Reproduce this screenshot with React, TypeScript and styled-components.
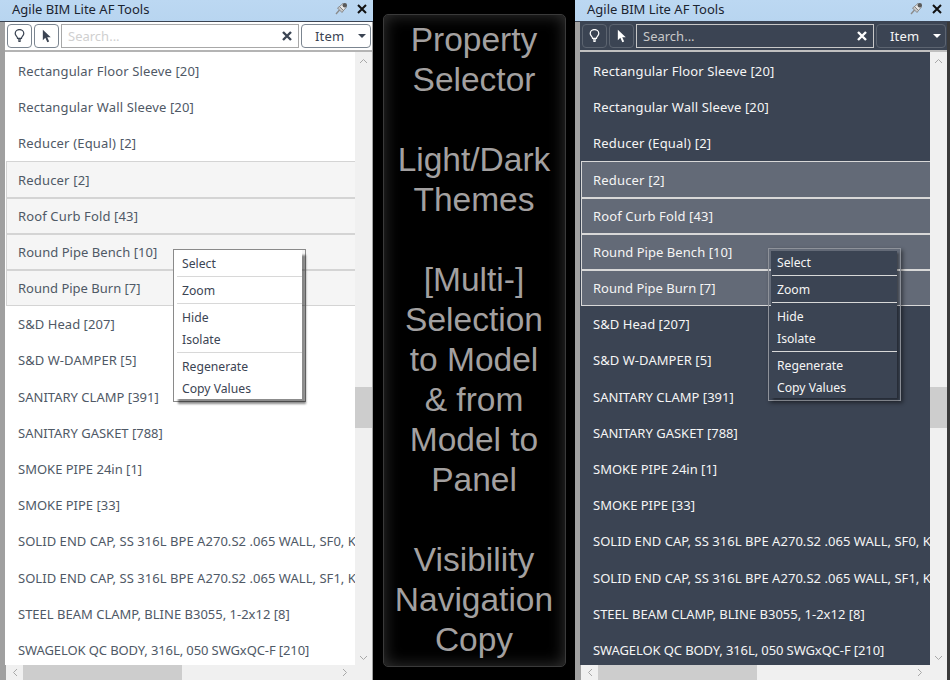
import React from "react";
import styled, { createGlobalStyle, css } from "styled-components";

const Global = createGlobalStyle`
  html, body { margin: 0; padding: 0; background: #000; overflow: hidden; }
  #root { width: 950px; height: 680px; }
`;

const Page = styled.div`
  width: 950px;
  height: 680px;
  display: flex;
  overflow: hidden;
  background: #000;
  font-family: "Noto Sans", "Open Sans", sans-serif;
`;

const Panel = styled.section<{ $dark?: boolean; $width: number }>`
  position: relative;
  width: ${(p) => p.$width}px;
  flex: none;
  height: 680px;
  display: flex;
  flex-direction: column;
  box-sizing: border-box;
  background: ${(p) => (p.$dark ? "linear-gradient(90deg, #a0a0a0 50%, #3a3a3a 50%)" : "#a0a0a0")};
  padding-left: 5px;
  padding-right: ${(p) => (p.$dark ? 3 : 1)}px;
  overflow: hidden;
`;

const TitleBar = styled.header<{ $dark?: boolean }>`
  height: 17px;
  margin: 0 ${(p) => (p.$dark ? -3 : -1)}px 0 -5px;
  padding: 0 ${(p) => (p.$dark ? 8 : 6)}px 4px 12px;
  flex: none;
  display: flex;
  align-items: center;
  background: linear-gradient(#bcd8f2, #b8d5f0);
  border-bottom: 1px solid #3b4453;
  color: #1b2430;
  font-size: 13px;
`;

const TitleText = styled.span`
  flex: 1;
`;

const TitleIcons = styled.span`
  display: flex;
  align-items: center;
  gap: 9px;
`;

const Toolbar = styled.div<{ $dark?: boolean }>`
  height: 30px;
  flex: none;
  box-sizing: border-box;
  display: flex;
  align-items: center;
  gap: 2px;
  padding: 2px 1px 2px 2px;
  background: ${(p) => (p.$dark ? "#3b4453" : "#fff")};
  border-bottom: 2px solid ${(p) => (p.$dark ? "#c0c0c0" : "#b4b4b4")};
`;

const ToolButton = styled.button<{ $dark?: boolean }>`
  width: 25px;
  height: 24px;
  padding: 0;
  flex: none;
  display: flex;
  align-items: center;
  justify-content: center;
  border-radius: 4px;
  background: ${(p) => (p.$dark ? "#3b4453" : "#fff")};
  border: 1px solid ${(p) => (p.$dark ? "#5c6470" : "#7b8590")};
`;

const SearchBox = styled.div<{ $dark?: boolean }>`
  flex: 1;
  height: 24px;
  box-sizing: border-box;
  display: flex;
  align-items: center;
  padding: 0 6px 0 6px;
  background: ${(p) => (p.$dark ? "#3b4453" : "#fff")};
  border: 1px solid ${(p) => (p.$dark ? "#c8c8c8" : "#a8a8a8")};
  color: ${(p) => (p.$dark ? "#c8c8c8" : "#d0d0d0")};
  font-size: 13px;
  min-width: 0;
`;

const SearchText = styled.span`
  flex: 1;
`;

const Dropdown = styled.div<{ $dark?: boolean }>`
  width: 70px;
  height: 24px;
  flex: none;
  box-sizing: border-box;
  display: flex;
  align-items: center;
  justify-content: space-between;
  padding: 0 4px 0 13px;
  border-radius: 4px;
  background: ${(p) => (p.$dark ? "#3b4453" : "#fff")};
  border: 1px solid ${(p) => (p.$dark ? "#5c6470" : "#7b8590")};
  color: ${(p) => (p.$dark ? "#f5f5f5" : "#3b4453")};
  font-size: 13px;
  letter-spacing: 0.2px;
`;

const Caret = styled.span<{ $dark?: boolean }>`
  width: 0;
  height: 0;
  border-left: 4px solid transparent;
  border-right: 4px solid transparent;
  border-top: 4px solid ${(p) => (p.$dark ? "#fff" : "#3b4453")};
`;

const Body = styled.div`
  flex: 1;
  min-height: 0;
  display: grid;
  grid-template-columns: 1fr 17px;
  grid-template-rows: 1fr 15px;
`;

const List = styled.ul<{ $dark?: boolean }>`
  list-style: none;
  margin: 0;
  padding: 0.85px 0 0 1px;
  overflow: hidden;
  min-width: 0;
  background: ${(p) => (p.$dark ? "#3b4453" : "#fff")};
`;

const Row = styled.li<{ $dark?: boolean; $selected?: boolean; $track: number }>`
  height: 36.2px;
  box-sizing: border-box;
  display: flex;
  align-items: center;
  padding-left: 12px;
  margin-right: -2px;
  white-space: nowrap;
  overflow: hidden;
  font-size: 13px;
  letter-spacing: ${(p) => p.$track}px;
  color: ${(p) => (p.$dark ? "#f5f5f5" : "#4f5966")};
  ${(p) =>
    p.$selected &&
    css`
      background: ${p.$dark ? "#636a77" : "#f5f5f5"};
      border: 1px solid ${p.$dark ? "#d8d8d8" : "#d4d4d4"};
      border-right: none;
      padding-left: 11px;
    `}
`;

const VScroll = styled.div`
  background: #f0f0f0;
  display: flex;
  flex-direction: column;
  align-items: center;
  justify-content: space-between;
  padding: 5px 0 3px;
  box-sizing: border-box;
  position: relative;
`;

const VThumb = styled.div`
  position: absolute;
  left: 0;
  right: 0;
  top: 335px;
  height: 41px;
  background: #cdcdcd;
`;

const HScroll = styled.div`
  background: #f0f0f0;
  position: relative;
  display: flex;
  align-items: center;
  justify-content: space-between;
  padding: 0 6px 0 5px;
  margin-left: 1px;
`;

const HThumb = styled.div`
  position: absolute;
  left: 17px;
  top: 0;
  bottom: 0;
  width: 159px;
  background: #cdcdcd;
`;

const Corner = styled.div`
  background: #f0f0f0;
`;

const Menu = styled.div<{ $dark?: boolean; $left: number; $top: number }>`
  position: absolute;
  left: ${(p) => p.$left}px;
  top: ${(p) => p.$top}px;
  width: 133px;
  height: 153px;
  box-sizing: border-box;
  border: 1px solid ${(p) => (p.$dark ? "#8e929a" : "#8a8a8a")};
  padding: ${(p) => (p.$dark ? "2px 3px 2px 2px" : "0 3px 2px 0")};
  box-shadow: ${(p) => (p.$dark ? "2px 2px 4px rgba(0,0,0,0.45)" : "none")};
`;

const MenuInner = styled.div<{ $dark?: boolean }>`
  height: 100%;
  box-sizing: border-box;
  padding: ${(p) => (p.$dark ? "0 0 0 1px" : "2px 0 0 3px")};
  background: ${(p) => (p.$dark ? "#3b4453" : "#fff")};
  box-shadow: ${(p) => (p.$dark ? "2px 2px 2px rgba(0,0,0,0.35)" : "4px 5px 2px rgba(0,0,0,0.45)")};
  color: ${(p) => (p.$dark ? "#f5f5f5" : "#3b4453")};
  font-size: 12.2px;
`;

const MenuItem = styled.div`
  height: 22px;
  display: flex;
  align-items: center;
  padding-left: 5px;
`;

const MenuSep = styled.div`
  height: 1px;
  margin: 2px 0;
  background: #d8d8d8;
`;

const Center = styled.aside`
  flex: none;
  width: 202px;
  height: 680px;
  box-sizing: border-box;
  padding: 14px 9px 13px 10px;
  background: #000;
`;

const GlowBox = styled.div`
  height: 100%;
  box-sizing: border-box;
  border: 1px solid #3a3a3a;
  border-radius: 5px;
  box-shadow: inset 0 0 16px rgba(120, 120, 120, 0.45);
  padding: 5px 1px 0 0;
  text-align: center;
  font-family: "Liberation Sans", Arial, sans-serif;
  font-size: 33.5px;
  line-height: 40px;
  color: #a3a0a0;
`;

const CenterLine = styled.div`
  height: 40px;
  white-space: nowrap;
`;

const rows: { label: string; selected?: boolean; track: number }[] = [
  { label: "Rectangular Floor Sleeve [20]", track: 0.14 },
  { label: "Rectangular Wall Sleeve [20]", track: 0.14 },
  { label: "Reducer (Equal) [2]", track: 0.18 },
  { label: "Reducer [2]", selected: true, track: 0.18 },
  { label: "Roof Curb Fold [43]", selected: true, track: 0.14 },
  { label: "Round Pipe Bench [10]", selected: true, track: 0.05 },
  { label: "Round Pipe Burn [7]", selected: true, track: 0 },
  { label: "S&D Head [207]", track: 0.05 },
  { label: "S&D W-DAMPER [5]", track: 0.05 },
  { label: "SANITARY CLAMP [391]", track: 0.02 },
  { label: "SANITARY GASKET [788]", track: 0 },
  { label: "SMOKE PIPE 24in [1]", track: 0 },
  { label: "SMOKE PIPE [33]", track: 0 },
  { label: "SOLID END CAP, SS 316L BPE A270.S2 .065 WALL, SF0, KF", track: 0.04 },
  { label: "SOLID END CAP, SS 316L BPE A270.S2 .065 WALL, SF1, KF", track: 0.04 },
  { label: "STEEL BEAM CLAMP, BLINE B3055, 1-2x12 [8]", track: 0 },
  { label: "SWAGELOK QC BODY, 316L, 050 SWGxQC-F [210]", track: -0.1 },
];

const centerLines = [
  "Property", "Selector", "", "Light/Dark", "Themes", "", "[Multi-]", "Selection",
  "to Model", "& from", "Model to", "Panel", "", "Visibility", "Navigation", "Copy",
];

const Pin = () => (
  <svg width="13" height="13" viewBox="0 0 13 13">
    <path d="M1 12 L4.5 8" stroke="#8a8a8a" strokeWidth="1.4" />
    <path d="M2.5 6 L7 10.5 L8.5 8.5 L4.5 4.5 Z" fill="#c8c8c8" stroke="#777" strokeWidth="0.8" />
    <path d="M4.5 4.5 L8 1.5 L11.5 5 L8.5 8.5 Z" fill="#e8e8e8" stroke="#777" strokeWidth="0.8" />
    <circle cx="9.8" cy="3.2" r="2.2" fill="#5a5a5a" />
  </svg>
);

const Close = ({ color, weight = 2 }: { color: string; weight?: number }) => (
  <svg width="10" height="10" viewBox="0 0 10 10">
    <path d="M1 1 L9 9 M9 1 L1 9" stroke={color} strokeWidth={weight} />
  </svg>
);

const Bulb = ({ color }: { color: string }) => (
  <svg width="11" height="14" viewBox="0 0 14 18" fill="none" stroke={color} strokeWidth="1.6">
    <path d="M4.5 12 C4.5 9.5 1.5 8.5 1.5 5.7 A5.5 5 0 0 1 12.5 5.7 C12.5 8.5 9.5 9.5 9.5 12 Z" />
    <path d="M5 14 H9 M5.5 16 H8.5" />
  </svg>
);

const Pointer = ({ color }: { color: string }) => (
  <svg width="10" height="14" viewBox="0 0 12 16">
    <path d="M1 0.5 L1 13 L4 10.2 L6.4 15.5 L8.6 14.5 L6.3 9.5 L10.5 9.5 Z" fill={color} />
  </svg>
);

const Chevron = ({ d }: { d: string }) => (
  <svg width="9" height="9" viewBox="0 0 9 9" fill="none" stroke="#a8a8a8" strokeWidth="1">
    <path d={d} />
  </svg>
);

const PanelView = ({ dark, width, left, top }: { dark?: boolean; width: number; left: number; top: number }) => (
  <Panel $dark={dark} $width={width}>
    <TitleBar $dark={dark}>
      <TitleText>Agile BIM Lite AF Tools</TitleText>
      <TitleIcons>
        <Pin />
        <Close color="#111" />
      </TitleIcons>
    </TitleBar>
    <Toolbar $dark={dark}>
      <ToolButton $dark={dark}>
        <Bulb color={dark ? "#fff" : "#3b4453"} />
      </ToolButton>
      <ToolButton $dark={dark}>
        <Pointer color={dark ? "#fff" : "#3b4453"} />
      </ToolButton>
      <SearchBox $dark={dark}>
        <SearchText>Search...</SearchText>
        <Close color={dark ? "#fff" : "#3b4453"} weight={2.4} />
      </SearchBox>
      <Dropdown $dark={dark}>
        Item
        <Caret $dark={dark} />
      </Dropdown>
    </Toolbar>
    <Body>
      <List $dark={dark}>
        {rows.map((row) => (
          <Row key={row.label} $dark={dark} $selected={row.selected} $track={row.track}>
            {row.label}
          </Row>
        ))}
      </List>
      <VScroll>
        <Chevron d="M1 6 L4.5 2.5 L8 6" />
        <VThumb />
        <Chevron d="M1 3 L4.5 6.5 L8 3" />
      </VScroll>
      <HScroll>
        <Chevron d="M6 1 L2.5 4.5 L6 8" />
        <HThumb />
        <Chevron d="M3 1 L6.5 4.5 L3 8" />
      </HScroll>
      <Corner />
    </Body>
    <Menu $dark={dark} $left={left} $top={top}>
      <MenuInner $dark={dark}>
        <MenuItem>Select</MenuItem>
        <MenuSep />
        <MenuItem>Zoom</MenuItem>
        <MenuSep />
        <MenuItem>Hide</MenuItem>
        <MenuItem>Isolate</MenuItem>
        <MenuSep />
        <MenuItem>Regenerate</MenuItem>
        <MenuItem>Copy Values</MenuItem>
      </MenuInner>
    </Menu>
  </Panel>
);

export default function App() {
  return (
    <>
      <Global />
      <Page>
        <PanelView width={373} left={173} top={249} />
        <Center>
          <GlowBox>
            {centerLines.map((line, i) => (
              <CenterLine key={i}>{line}</CenterLine>
            ))}
          </GlowBox>
        </Center>
        <PanelView dark width={375} left={193} top={248} />
      </Page>
    </>
  );
}
